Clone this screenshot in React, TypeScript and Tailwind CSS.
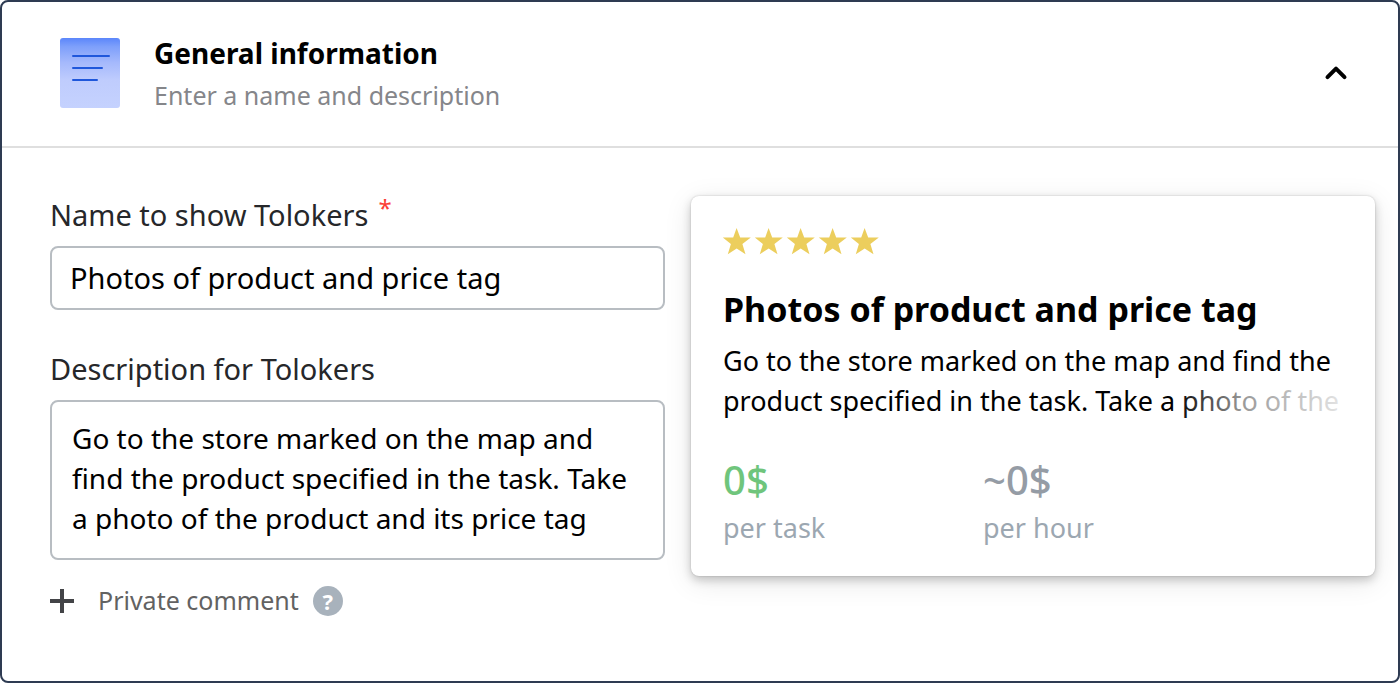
import { useState } from "react";

const DESCRIPTION =
  "Go to the store marked on the map and find the product specified in the task. Take a photo of the product and its price tag";

function DocumentIcon() {
  return (
    <svg className="my-1.5 h-[70px] w-[60px] shrink-0" viewBox="0 0 60 70" fill="none" aria-hidden="true">
      <defs>
        <linearGradient id="sheet" x1="0" y1="0" x2="0" y2="1">
          <stop offset="0" stopColor="#5b86fb" />
          <stop offset="0.12" stopColor="#7d9ffb" />
          <stop offset="0.35" stopColor="#a5b9fc" />
          <stop offset="0.6" stopColor="#bfccfd" />
          <stop offset="1" stopColor="#c5d2fe" />
        </linearGradient>
      </defs>
      <rect width="60" height="70" rx="3" fill="url(#sheet)" />
      <path d="M13 18H49M13 30H42M13 42H37" stroke="#1f57db" strokeWidth="2" strokeLinecap="round" />
    </svg>
  );
}

function Star() {
  return (
    <svg className="h-8 w-8" viewBox="0 0 32 32" fill="#ecce5d" aria-hidden="true">
      <path d="M15.6 3L19.2 12.4L29.8 12.5L21.4 18.9L24.5 29.3L15.7 23.4L6.8 29.3L9.9 18.9L1.8 12.5L12.2 12.4Z" />
    </svg>
  );
}

function Rate({ value, caption, tone }: { value: string; caption: string; tone: string }) {
  return (
    <div>
      <div className={`text-[40px] leading-12 font-medium ${tone}`}>{value}</div>
      <div className="mt-1 text-[27px] leading-10 text-[#9ca7b1]">{caption}</div>
    </div>
  );
}

export default function App() {
  const [open, setOpen] = useState(true);
  const [name, setName] = useState("Photos of product and price tag");
  const [description, setDescription] = useState(DESCRIPTION);

  return (
    <section className="rounded-lg border-2 border-[#2e3b52] bg-white font-['Noto_Sans',sans-serif] text-black">
      <header className="flex items-start border-b-2 border-[#dfdfdf] py-[30px] pr-12 pl-[58px]">
        <DocumentIcon />
        <div className="ml-[34px] grow">
          <h2 className="text-[28px] leading-[42px] font-bold">General information</h2>
          <p className="text-[25px] leading-[42px] text-[#85868a]">Enter a name and description</p>
        </div>
        <button
          type="button"
          className="my-6"
          aria-label="Toggle section"
          aria-expanded={open}
          onClick={() => setOpen(!open)}
        >
          <svg
            className="h-8 w-7"
            viewBox="0 0 28 32"
            fill="none"
            stroke="#000"
            strokeWidth="4"
            strokeLinecap="round"
            strokeLinejoin="round"
            aria-hidden="true"
          >
            <path d={open ? "M5.5 21.2L14 12.7L22.5 21.2" : "M5.5 12.7L14 21.2L22.5 12.7"} />
          </svg>
        </button>
      </header>

      {open && (
        <div className="grid grid-cols-[615fr_684fr] items-start gap-[26px] pt-12 pr-[23px] pb-[59px] pl-12">
          <form className="min-w-0">
            <label htmlFor="task-name" className="flex gap-2.5 text-[29px] leading-[38px] text-[#26272a]">
              Name to show Tolokers
              <span className="text-[24px] leading-6 text-[#fb3f36]">*</span>
            </label>
            <input
              id="task-name"
              className="mt-3 block h-16 w-full rounded-lg border-2 border-[#b8bdc2] px-[18px] pb-0.5 text-[29px] outline-none"
              value={name}
              onChange={(e) => setName(e.target.value)}
            />

            <label htmlFor="task-description" className="mt-10 block text-[29px] leading-[38px] text-[#26272a]">
              Description for Tolokers
            </label>
            <textarea
              id="task-description"
              rows={3}
              className="mt-3 block w-full resize-none overflow-hidden rounded-lg border-2 border-[#b8bdc2] px-5 pt-4 pb-5 text-[28px] leading-10 outline-none"
              value={description}
              onChange={(e) => setDescription(e.target.value)}
            />

            <div className="mt-[19px] flex items-center gap-3.5">
              <button type="button" className="flex items-center gap-6 text-[25px] leading-[43px] text-[#626262]">
                <svg className="h-6 w-6" viewBox="0 0 24 24" stroke="#434447" strokeWidth="4" aria-hidden="true">
                  <path d="M0 12H24M12 0V24" />
                </svg>
                Private comment
              </button>
              <button
                type="button"
                aria-label="About private comments"
                className="flex h-[30px] w-[30px] items-center justify-center rounded-full bg-[#a8b2bc] text-[22px] leading-none font-bold text-white"
              >
                ?
              </button>
            </div>
          </form>

          <article className="min-w-0 rounded-lg bg-white px-8 pt-[29px] pb-7 shadow-[0_4px_10px_rgba(0,0,0,0.2),0_6px_28px_rgba(0,0,0,0.1),0_0_2px_rgba(0,0,0,0.2)]">
            <div className="-ml-0.5 flex" role="img" aria-label="5 stars">
              <Star />
              <Star />
              <Star />
              <Star />
              <Star />
            </div>
            <h3 className="mt-7 text-[34px] leading-12 font-bold">{name}</h3>
            <div className="relative mt-2">
              <p className="text-[27px] leading-10">
                Go to the store marked on the map and find the product specified in the task. Take a photo of the
              </p>
              <div className="absolute right-0 bottom-0 h-10 w-[168px] bg-linear-to-r from-white/0 via-white/60 via-40% to-white/90" />
            </div>
            <div className="mt-[35px] grid grid-cols-[260px_1fr]">
              <Rate value="0$" caption="per task" tone="text-[#6fc57c]" />
              <Rate value="~0$" caption="per hour" tone="text-[#959ca5]" />
            </div>
          </article>
        </div>
      )}
    </section>
  );
}
